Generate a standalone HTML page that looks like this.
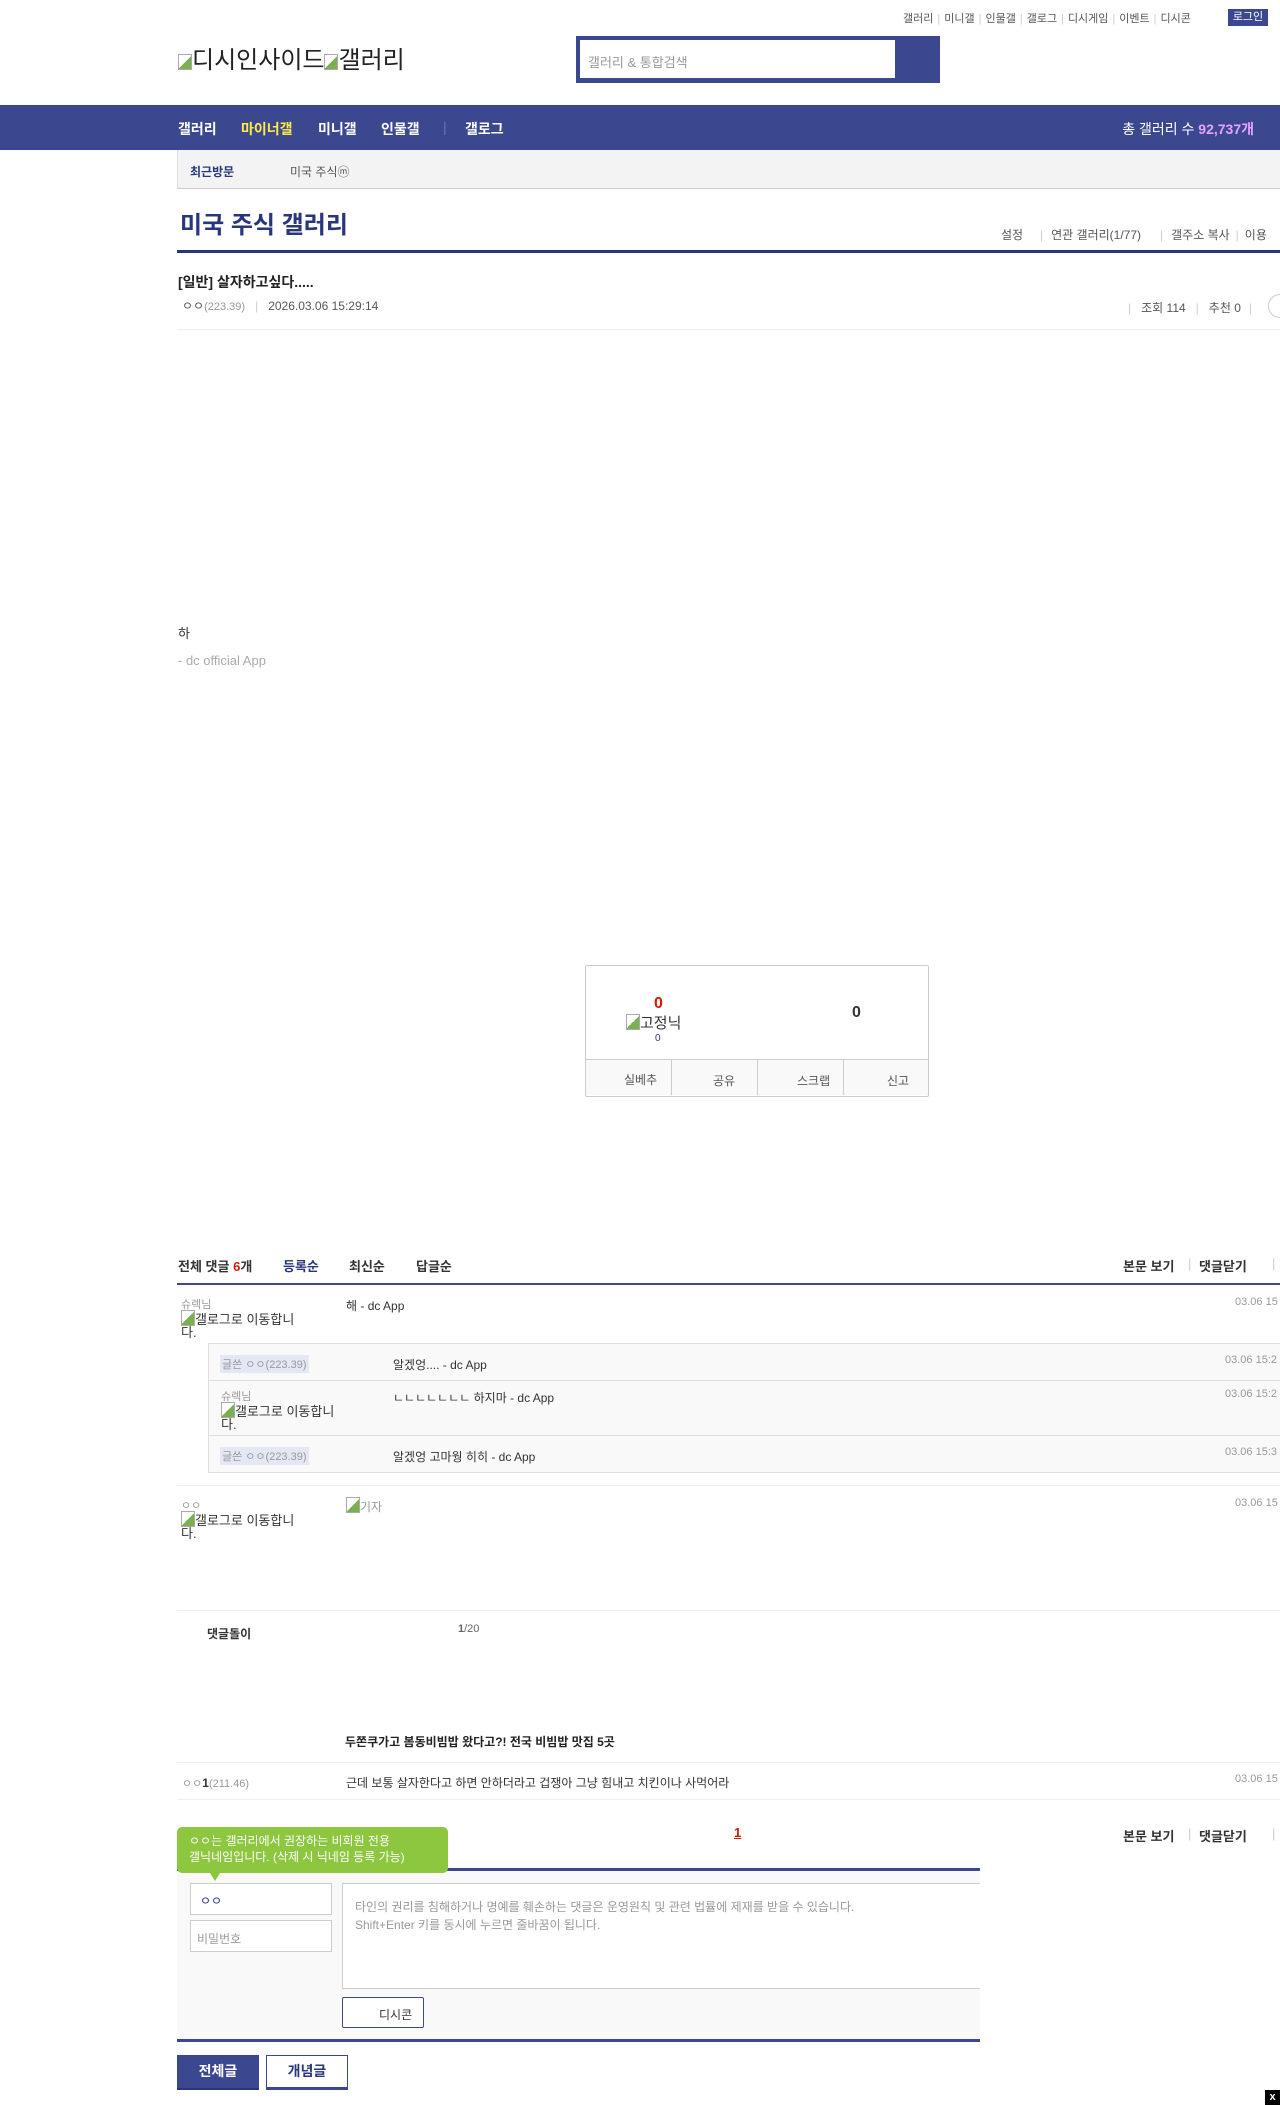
<!DOCTYPE html>
<html><head><meta charset="utf-8"><style>
*{margin:0;padding:0;box-sizing:border-box}
body{width:1280px;height:2105px;position:relative;overflow:hidden;background:#fff;font-family:"Liberation Sans","Noto Sans CJK KR",sans-serif;color:#333;font-size:12px}
.a{position:absolute;white-space:nowrap}
.g{color:#999}
.sep{color:#ccc;margin:0 4px}
.ln{position:absolute;left:177px;right:0;height:1px;background:#eee}
.img{display:inline-block;width:14px;height:16px;border:1px solid #aaa;background:linear-gradient(135deg,#fff 50%,#7ab050 50%);vertical-align:-2px}
.nv{position:absolute;top:119px;font-size:14px;font-weight:bold;color:#fff}
.ch{position:absolute;top:1256px;font-size:13px;font-weight:bold;color:#333}
</style></head><body>
<div class="a" style="top:10px;left:903px;font-size:11px;color:#555">갤러리<span class="sep">|</span>미니갤<span class="sep">|</span>인물갤<span class="sep">|</span>갤로그<span class="sep">|</span>디시게임<span class="sep">|</span>이벤트<span class="sep">|</span>디시콘</div>
<div class="a" style="top:9px;left:1228px;width:40px;height:17px;background:#3b4890;color:#fff;font-size:11px;text-align:center;line-height:17px">로그인</div>
<div class="a" style="top:40px;left:178px;font-size:24px;color:#222"><span class="img"></span>디시인사이드<span class="img"></span>갤러리</div>
<div class="a" style="top:36px;left:576px;width:364px;height:47px;background:#3b4890"></div>
<div class="a" style="top:40px;left:580px;width:315px;height:38px;background:#fff;color:#999;font-size:13px;padding:12px 8px">갤러리 &amp; 통합검색</div>
<div class="a" style="top:105px;left:0;width:1280px;height:45px;background:#3b4890"></div>
<div class="nv" style="left:178px">갤러리</div>
<div class="nv" style="left:241px;color:#ffed45">마이너갤</div>
<div class="nv" style="left:318px">미니갤</div>
<div class="nv" style="left:381px">인물갤</div>
<div class="nv" style="left:443px;color:#6a76b0;font-weight:normal">|</div>
<div class="nv" style="left:465px">갤로그</div>
<div class="a" style="top:119px;right:26px;font-size:14px;color:#fff">총 갤러리 수 <b style="color:#e6a3ff">92,737개</b></div>
<div class="a" style="top:150px;left:177px;width:1103px;height:39px;background:#f3f3f3;border-left:1px solid #ddd;border-bottom:1px solid #ccc"></div>
<div class="a" style="top:163px;left:190px;font-size:12px;font-weight:bold;color:#29367c">최근방문</div>
<div class="a" style="top:163px;left:290px;font-size:12px;color:#555">미국 주식ⓜ</div>
<div class="a" style="top:205px;left:180px;font-size:24px;font-weight:bold;color:#29367c">미국 주식 갤러리</div>
<div class="a" style="top:226px;left:1001px;font-size:12px;color:#555">설정</div>
<div class="a" style="top:226px;left:1040px;font-size:12px;color:#555"><span class="sep" style="margin:0 8px 0 0">|</span>연관 갤러리(1/77)</div>
<div class="a" style="top:226px;left:1160px;font-size:12px;color:#555"><span class="sep" style="margin:0 8px 0 0">|</span>갤주소 복사<span class="sep" style="margin:0 6px">|</span>이용</div>
<div class="a" style="top:250px;left:177px;width:1103px;height:3px;background:#29367c"></div>
<div class="a" style="top:272px;left:178px;font-size:14px;font-weight:bold;color:#222">[일반] 살자하고싶다.....</div>
<div class="a" style="top:297px;left:182px;font-size:12px;color:#555">ㅇㅇ<span class="g" style="font-size:11px">(223.39)</span><span class="sep" style="margin:0 10px">|</span>2026.03.06 15:29:14</div>
<div class="a" style="top:299px;left:1128px;font-size:12px;color:#555"><span class="sep" style="margin:0 10px 0 0">|</span>조회 114<span class="sep" style="margin:0 10px">|</span>추천 0<span class="sep" style="margin:0 8px">|</span></div>
<div class="a" style="top:294px;left:1268px;width:24px;height:24px;border:1px solid #ccc;border-radius:50%"></div>
<div class="ln" style="top:329px"></div>
<div class="a" style="top:623px;left:178px;font-size:13px;color:#333">하</div>
<div class="a" style="top:653px;left:178px;font-size:13px;color:#aaa">- dc official App</div>
<div class="a" style="top:965px;left:585px;width:344px;height:132px;border:1px solid #ccc;border-radius:2px"></div>
<div class="a" style="top:995px;left:654px;font-size:16px;font-weight:bold;color:#d31900">0</div>
<div class="a" style="top:1012px;left:626px;font-size:15px;color:#333"><span class="img"></span>고정닉</div>
<div class="a" style="top:1033px;left:655px;font-size:10px;color:#29367c">0</div>
<div class="a" style="top:1004px;left:852px;font-size:16px;font-weight:bold;color:#333">0</div>
<div class="a" style="top:1059px;left:586px;width:342px;height:36px;background:#f9f9f9;border-top:1px solid #ccc"></div>
<div class="a" style="top:1060px;left:671px;width:1px;height:35px;background:#ccc"></div>
<div class="a" style="top:1060px;left:757px;width:1px;height:35px;background:#ccc"></div>
<div class="a" style="top:1060px;left:843px;width:1px;height:35px;background:#ccc"></div>
<div class="a" style="top:1071px;left:624px;font-size:12px;color:#555">실베추</div>
<div class="a" style="top:1072px;left:713px;font-size:12px;color:#555">공유</div>
<div class="a" style="top:1072px;left:797px;font-size:12px;color:#555">스크랩</div>
<div class="a" style="top:1072px;left:887px;font-size:12px;color:#555">신고</div>
<div class="ch" style="left:178px">전체 댓글 <span style="color:#d31900">6</span>개</div>
<div class="ch" style="left:283px;color:#29367c">등록순</div>
<div class="ch" style="left:349px">최신순</div>
<div class="ch" style="left:416px">답글순</div>
<div class="ch" style="left:1123px">본문 보기</div>
<div class="ch" style="left:1188px;font-weight:normal;color:#ccc">|</div>
<div class="ch" style="left:1199px">댓글닫기</div>
<div class="ch" style="left:1272px;font-weight:normal;color:#ccc">|</div>
<div class="a" style="top:1283px;left:177px;width:1103px;height:2px;background:#3b4890"></div>
<div class="a" style="top:1296px;left:181px;font-size:11px;color:#999">슈렉님</div>
<div class="a" style="top:1310px;left:181px;font-size:13px;color:#333;width:125px;white-space:normal;line-height:13px"><span class="img"></span>갤로그로 이동합니다.</div>
<div class="a" style="top:1297px;left:346px;font-size:12px;color:#333">해 - dc App</div>
<div class="a" style="top:1296px;left:1235px;font-size:11px;color:#999">03.06 15</div>
<div class="a" style="top:1343px;left:208px;width:1072px;height:130px;background:#f9f9f9;border:1px solid #ddd;border-right:0"></div>
<div class="a" style="top:1380px;left:209px;width:1071px;height:1px;background:#ddd"></div>
<div class="a" style="top:1435px;left:209px;width:1071px;height:1px;background:#ddd"></div>
<div class="a" style="top:1355px;left:220px;font-size:11px;color:#999;background:#e4e8f5;padding:1px 2px">글쓴 ㅇㅇ(223.39)</div>
<div class="a" style="top:1356px;left:393px;font-size:12px;color:#333">알겠엉.... - dc App</div>
<div class="a" style="top:1354px;left:1225px;font-size:11px;color:#999">03.06 15:2</div>
<div class="a" style="top:1388px;left:221px;font-size:11px;color:#999">슈렉님</div>
<div class="a" style="top:1402px;left:221px;font-size:13px;color:#333;width:125px;white-space:normal;line-height:13px"><span class="img"></span>갤로그로 이동합니다.</div>
<div class="a" style="top:1389px;left:393px;font-size:12px;color:#333">ㄴㄴㄴㄴㄴㄴㄴ 하지마 - dc App</div>
<div class="a" style="top:1388px;left:1225px;font-size:11px;color:#999">03.06 15:2</div>
<div class="a" style="top:1447px;left:220px;font-size:11px;color:#999;background:#e4e8f5;padding:1px 2px">글쓴 ㅇㅇ(223.39)</div>
<div class="a" style="top:1448px;left:393px;font-size:12px;color:#333">알겠엉 고마웡 히히 - dc App</div>
<div class="a" style="top:1446px;left:1225px;font-size:11px;color:#999">03.06 15:3</div>
<div class="ln" style="top:1485px"></div>
<div class="a" style="top:1497px;left:181px;font-size:11px;color:#999">ㅇㅇ</div>
<div class="a" style="top:1511px;left:181px;font-size:13px;color:#333;width:125px;white-space:normal;line-height:13px"><span class="img"></span>갤로그로 이동합니다.</div>
<div class="a" style="top:1497px;left:346px;font-size:12px;color:#999"><span class="img"></span>기자</div>
<div class="a" style="top:1497px;left:1235px;font-size:11px;color:#999">03.06 15</div>
<div class="ln" style="top:1610px"></div>
<div class="a" style="top:1625px;left:207px;font-size:12px;font-weight:bold;color:#333">댓글돌이</div>
<div class="a" style="top:1623px;left:458px;font-size:11px;color:#666"><b>1</b>/20</div>
<div class="a" style="top:1733px;left:345px;font-size:12px;font-weight:bold;color:#222">두쫀쿠가고 봄동비빔밥 왔다고?! 전국 비빔밥 맛집 5곳</div>
<div class="ln" style="top:1762px"></div>
<div class="a" style="top:1775px;left:182px;font-size:11px;color:#999">ㅇㅇ<b style="color:#333;font-size:12px">1</b>(211.46)</div>
<div class="a" style="top:1774px;left:346px;font-size:12px;color:#333">근데 보통 살자한다고 하면 안하더라고 겁쟁아 그냥 힘내고 치킨이나 사먹어라</div>
<div class="a" style="top:1773px;left:1235px;font-size:11px;color:#999">03.06 15</div>
<div class="ln" style="top:1799px"></div>
<div class="a" style="top:1825px;left:734px;font-size:13px;font-weight:bold;color:#d31900;text-decoration:underline">1</div>
<div class="ch" style="top:1826px;left:1123px">본문 보기</div>
<div class="ch" style="top:1826px;left:1188px;font-weight:normal;color:#ccc">|</div>
<div class="ch" style="top:1826px;left:1199px">댓글닫기</div>
<div class="ch" style="top:1826px;left:1272px;font-weight:normal;color:#ccc">|</div>
<div class="a" style="top:1868px;left:177px;width:803px;height:3px;background:#3b4890"></div>
<div class="a" style="top:1871px;left:177px;width:803px;height:168px;background:#f9f9f9"></div>
<div class="a" style="top:1827px;left:177px;width:271px;height:46px;background:#8dc63f;border-radius:5px;color:#fff;font-size:12px;line-height:16px;padding:6px 12px">ㅇㅇ는 갤러리에서 권장하는 비회원 전용<br>갤닉네임입니다. (삭제 시 닉네임 등록 가능)</div>
<div class="a" style="top:1873px;left:210px;width:0;height:0;border-left:5px solid transparent;border-right:5px solid transparent;border-top:8px solid #8dc63f"></div>
<div class="a" style="top:1883px;left:190px;width:142px;height:32px;background:#fff;border:1px solid #ccc;font-size:12px;color:#29367c;padding:8px 9px">ㅇㅇ</div>
<div class="a" style="top:1920px;left:190px;width:142px;height:32px;background:#fff;border:1px solid #ccc;font-size:12px;color:#999;padding:9px 6px">비밀번호</div>
<div class="a" style="top:1883px;left:342px;width:638px;height:106px;background:#fff;border:1px solid #ccc;border-right:0;font-size:12px;color:#999;padding:14px 12px;line-height:18px">타인의 권리를 침해하거나 명예를 훼손하는 댓글은 운영원칙 및 관련 법률에 제재를 받을 수 있습니다.<br>Shift+Enter 키를 동시에 누르면 줄바꿈이 됩니다.</div>
<div class="a" style="top:1997px;left:342px;width:82px;height:31px;background:#fff;border:1px solid #3b4890;border-radius:2px;font-size:12px;color:#333;padding:8px 0 0 36px">디시콘</div>
<div class="a" style="top:2039px;left:177px;width:803px;height:3px;background:#3b4890"></div>
<div class="a" style="top:2055px;left:177px;width:82px;height:35px;background:#3b4890;border-bottom:2px solid #29367c;color:#fff;font-size:14px;font-weight:bold;text-align:center;line-height:33px">전체글</div>
<div class="a" style="top:2055px;left:266px;width:82px;height:35px;background:#fff;border:1px solid #3b4890;border-bottom:3px solid #3b4890;color:#29367c;font-size:14px;font-weight:bold;text-align:center;line-height:31px">개념글</div>
<div class="a" style="top:2090px;left:1265px;width:15px;height:15px;background:#000;color:#fff;font-size:11px;font-weight:bold;text-align:center;line-height:15px">x</div>
</body></html>
